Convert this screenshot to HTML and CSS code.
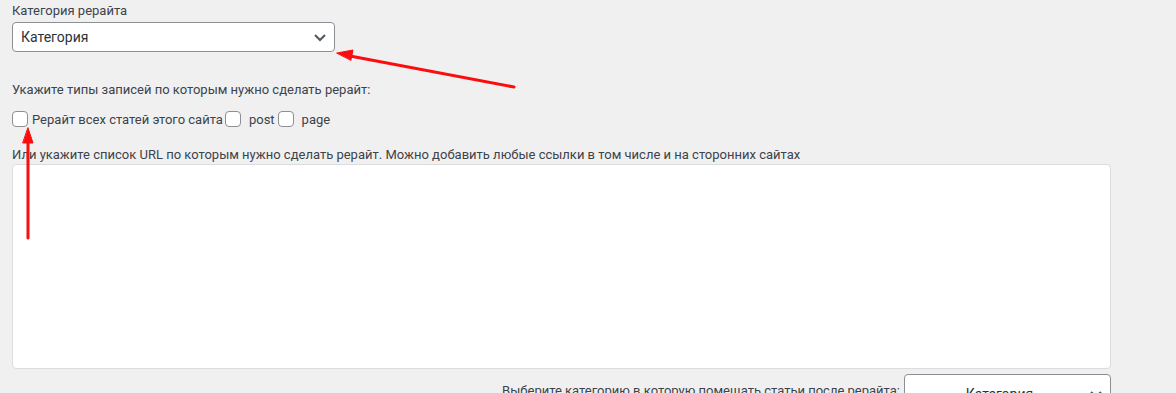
FILE: index.html
```html
<!doctype html>
<html>
<head>
	<meta charset="utf-8">
	<title>Рерайт</title>
	<link rel="stylesheet" href="styles.css">
</head>
<body>
	<div class="wrap">
		<label class="caption">Категория рерайта</label>
		<div class="select select-main">
			<span>Категория</span>
			<svg class="chevron" width="20" height="20" viewBox="0 0 20 20"><path d="M5 8l5 5 5-5" fill="none" stroke="#50575e" stroke-width="2"/></svg>
		</div>

		<p class="hint">Укажите типы записей по которым нужно сделать рерайт:</p>
		<div class="types">
			<span class="check"></span><span class="type-label">Рерайт всех статей этого сайта</span>
			<span class="check"></span><span class="type-label spaced">post</span>
			<span class="check"></span><span class="type-label spaced">page</span>
		</div>

		<p class="hint hint-url">Или укажите список URL по которым нужно сделать рерайт. Можно добавить любые ссылки в том числе и на сторонних сайтах</p>
		<div class="urls"></div>

		<div class="target">
			<span class="target-label">Выберите категорию в которую помещать статьи после рерайта:</span>
			<div class="select select-small">
				<span>Категория</span>
				<svg class="chevron" width="20" height="20" viewBox="0 0 20 20"><path d="M5 8l5 5 5-5" fill="none" stroke="#50575e" stroke-width="2"/></svg>
			</div>
		</div>
	</div>

	<!-- annotation arrows -->
	<svg class="arrows" width="1176" height="393" viewBox="0 0 1176 393">
		<g stroke="#fb0d0d" stroke-width="3" stroke-linecap="round" fill="#fb0d0d">
			<line x1="514" y1="87" x2="350" y2="56"/>
			<path d="M337 53 L353 50 L351 60 Z" stroke-width="1"/>
			<line x1="28" y1="238" x2="28" y2="142"/>
			<path d="M28 128 L33 143 L23 143 Z" stroke-width="1"/>
		</g>
	</svg>
</body>
</html>
```
FILE: styles.css
```css
body {
	margin: 0;
	background: #f0f0f1;
	font-family: Roboto, "Noto Sans", sans-serif;
	font-size: 13px;
	color: #3c434a;
}

.wrap {
	width: 1099px;
	padding: 2px 0 0 12px;
}

.caption {
	display: block;
	line-height: 18px;
	height: 20px;
}

.select {
	display: flex;
	align-items: center;
	box-sizing: border-box;
	height: 30px;
	background: #fff;
	border: 1px solid #8c8f94;
	border-radius: 4px;
	font-size: 14px;
	color: #2c3338;
}

.select-main {
	width: 323px;
	padding: 0 4px 0 8px;
}

.select span {
	flex: 1;
}

.chevron {
	flex: none;
}

.hint {
	margin: 0;
	line-height: 18px;
}

.select-main + .hint {
	margin-top: 29px;
}

.types {
	display: flex;
	align-items: center;
	height: 20px;
	margin-top: 10px;
}

.check {
	box-sizing: border-box;
	width: 16px;
	height: 16px;
	background: #fff;
	border: 1px solid #8c8f94;
	border-radius: 4px;
	margin-right: 4px;
}

.type-label {
	margin-right: 2px;
}

.type-label.spaced {
	margin-left: 4px;
	margin-right: 3px;
}

.hint-url {
	margin-top: 17px;
}

.urls {
	box-sizing: border-box;
	height: 205px;
	background: #fff;
	border: 1px solid #dcdcde;
	border-radius: 4px;
}

.target {
	display: flex;
	justify-content: flex-end;
	align-items: flex-start;
	margin-top: 5px;
}

.target-label {
	padding-top: 9px;
	margin-right: 4px;
}

.select-small {
	width: 207px;
	height: 40px;
	padding: 0 4px 0 8px;
	text-align: center;
}

.arrows {
	position: absolute;
	left: 0;
	top: 0;
	pointer-events: none;
}
```
